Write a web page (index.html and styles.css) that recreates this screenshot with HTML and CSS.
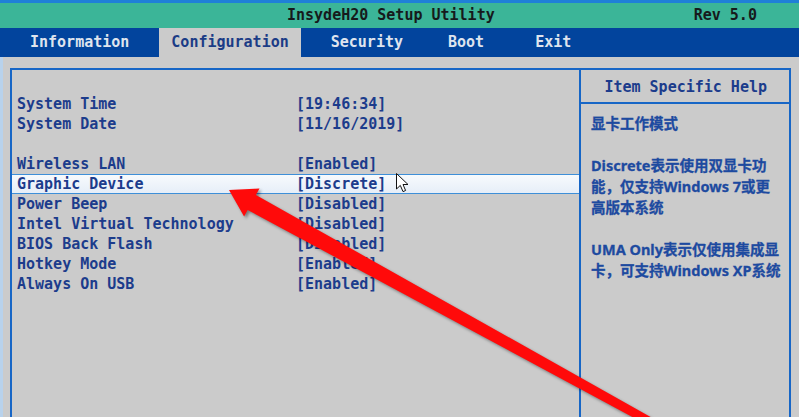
FILE: index.html
```html
<!DOCTYPE html>
<html>
<head>
    <link rel="stylesheet" href="styles.css">
</head>
<body>
    <div class="topline"></div>
    <div class="titlebar">
        <span class="title">InsydeH20 Setup Utility</span>
        <span class="rev">Rev 5.0</span>
    </div>
    <div class="tabs">
        <span class="tab">Information</span>
        <span class="tab active">Configuration</span>
        <span class="tab">Security</span>
        <span class="tab">Boot</span>
        <span class="tab">Exit</span>
    </div>

    <div class="main">
        <div class="frame">
            <div class="settings">
                <div class="row"><span class="label">System Time</span><span>[19:46:34]</span></div>
                <div class="row"><span class="label">System Date</span><span>[11/16/2019]</span></div>
                <div class="row"></div>
                <div class="row"><span class="label">Wireless LAN</span><span>[Enabled]</span></div>
                <div class="row selected"><span class="label">Graphic Device</span><span>[Discrete]</span></div>
                <div class="row"><span class="label">Power Beep</span><span>[Disabled]</span></div>
                <div class="row"><span class="label">Intel Virtual Technology</span><span>[Disabled]</span></div>
                <div class="row"><span class="label">BIOS Back Flash</span><span>[Disabled]</span></div>
                <div class="row"><span class="label">Hotkey Mode</span><span>[Enabled]</span></div>
                <div class="row"><span class="label">Always On USB</span><span>[Enabled]</span></div>
            </div>
            <div class="help">
                <div class="help-title">Item Specific Help</div>
                <div class="help-body">
                    <p>显卡工作模式</p>
                    <p>Discrete表示使用双显卡功<br>能，仅支持Windows 7或更<br>高版本系统</p>
                    <p>UMA Only表示仅使用集成显<br>卡，可支持Windows XP系统</p>
                </div>
            </div>
        </div>
    </div>

    <!-- red annotation arrow drawn over the screen -->
    <svg class="arrow" viewBox="0 0 799 417" width="799" height="417">
        <polygon points="229,190 259.5,188.5 255.9,195.1 681.9,434.6 678.1,441.6 247.7,210 244.1,216.5" fill="#ff0a0a"/>
    </svg>

    <svg class="cursor" viewBox="0 0 13 20" width="13" height="20">
        <path d="M0.5 0.5 L0.5 16 L4.3 12.4 L7 18.6 L9.6 17.5 L7 11.5 L12 11.5 Z" fill="#fff" stroke="#111" stroke-width="1"/>
    </svg>
</body>
</html>
```

FILE: styles.css
```css
body {
    margin: 0;
    width: 799px;
    height: 417px;
    overflow: hidden;
    position: relative;
    background-color: #cbcbcb;
    font-family: "DejaVu Sans Mono", "Liberation Mono", monospace;
    font-weight: bold;
    font-size: 15px;
}

/* top bars */
.topline {
    height: 3px;
    background-color: #1f80d8;
}

.titlebar {
    height: 25px;
    line-height: 25px;
    background-color: #3bb598;
    color: #161a1c;
    padding-left: 287px;
    display: flex;
}

.titlebar .rev {
    margin-left: 199px;
}

.tabs {
    height: 29px;
    line-height: 28px;
    background-color: #02449d;
    display: flex;
    gap: 18px;
    padding-left: 18px;
}

.tab {
    padding: 0 12px;
    color: #dfe4ee;
}

.tab:nth-child(4) {
    margin-left: 3px;
}

.tab:nth-child(5) {
    margin-left: 9px;
}

.tab.active {
    background-color: #cbcbcb;
    color: #1b3c86;
}

/* main frame, runs on below the bottom of the screen */
.main {
    border-left: 3px solid #b8d2ec;
    padding-top: 11px;
    height: 349px;
}

.frame {
    margin-left: 7px;
    width: 777px;
    height: 347px;
    border: 2px solid #1766c6;
    border-bottom: none;
    display: grid;
    grid-template-columns: 569px 1fr;
}

.settings {
    border-right: 2px solid #1766c6;
    padding-top: 24px;
    color: #1c3c8c;
}

.row {
    height: 20px;
    line-height: 20px;
    padding-left: 5px;
    display: flex;
}

.row .label {
    width: 279px;
}

.row.selected {
    height: 18px;
    line-height: 18px;
    border-top: 1px solid #3e8fd8;
    border-bottom: 1px solid #3e8fd8;
    background: linear-gradient(#f7fafd, #e6eef8);
}

.help-title {
    padding-top: 2px;
    line-height: 30px;
    text-align: center;
    color: #1c3c8c;
    border-bottom: 2px solid #1766c6;
}

.help-body {
    padding: 9px 10px;
    font-family: "Noto Sans", "Noto Sans CJK SC", sans-serif;
    font-size: 14.5px;
    line-height: 21px;
    color: #1d4aa0;
    white-space: nowrap;
    -webkit-text-stroke: 0.3px #1d4aa0;
}

.help-body p {
    margin: 0 0 21px 0;
}

/* overlays */
.arrow {
    position: absolute;
    top: 0;
    left: 0;
    filter: drop-shadow(2px 2px 1.5px rgba(0, 0, 0, 0.4));
}

.cursor {
    position: absolute;
    left: 396px;
    top: 173px;
}
```
